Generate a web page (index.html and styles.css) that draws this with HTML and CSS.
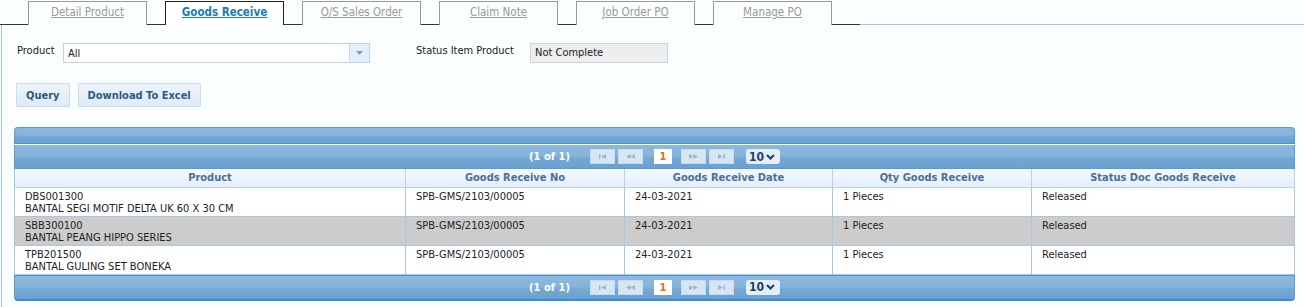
FILE: index.html
```html
<!DOCTYPE html>
<html>
<head>
<meta charset="utf-8">
<link rel="stylesheet" href="styles.css">
</head>
<body>
<div class="tabbar">
  <a class="tab">Detail Product</a>
  <a class="tab active">Goods Receive</a>
  <a class="tab">O/S Sales Order</a>
  <a class="tab">Claim Note</a>
  <a class="tab">Job Order PO</a>
  <a class="tab">Manage PO</a>
</div>
<div class="panel">
  <div class="form-row">
    <span class="label">Product</span>
    <div class="select">
      <span class="select-text">All</span>
      <span class="select-arrow"><svg width="7" height="4" viewBox="0 0 7 4"><path d="M0 0H7L3.5 4Z" fill="#7b9fc0"/></svg></span>
    </div>
    <span class="label label-status">Status Item Product</span>
    <div class="readonly">Not Complete</div>
  </div>
  <div class="btn-row">
    <button class="btn">Query</button>
    <button class="btn">Download To Excel</button>
  </div>
  <div class="grid">
    <div class="caption"></div>
    <div class="pager pager-top">
      <span class="pager-info">(1 of 1)</span>
      <span class="pbtn"><svg width="7" height="5" viewBox="0 0 7 5"><rect x="0" y="0" width="1.4" height="5" fill="#9bb6cf"/><path d="M7 0V5L2 2.5Z" fill="#9bb6cf"/></svg></span>
      <span class="pbtn"><svg width="9" height="5" viewBox="0 0 9 5"><path d="M4.5 0V5L0 2.5Z M9 0V5L4.5 2.5Z" fill="#9bb6cf"/></svg></span>
      <span class="pnum">1</span>
      <span class="pbtn"><svg width="9" height="5" viewBox="0 0 9 5"><path d="M0 0V5L4.5 2.5Z M4.5 0V5L9 2.5Z" fill="#9bb6cf"/></svg></span>
      <span class="pbtn"><svg width="7" height="5" viewBox="0 0 7 5"><path d="M0 0V5L5 2.5Z" fill="#9bb6cf"/><rect x="5.6" y="0" width="1.4" height="5" fill="#9bb6cf"/></svg></span>
      <span class="psel">10 <svg width="9" height="6" viewBox="0 0 9 6"><path d="M1 1L4.5 4.5L8 1" stroke="#1e3f62" stroke-width="2" fill="none"/></svg></span>
    </div>
    <table class="data">
      <colgroup>
        <col style="width:391px"><col style="width:219px"><col style="width:208px"><col style="width:199px"><col>
      </colgroup>
      <thead>
        <tr><th>Product</th><th>Goods Receive No</th><th>Goods Receive Date</th><th>Qty Goods Receive</th><th>Status Doc Goods Receive</th></tr>
      </thead>
      <tbody>
        <tr><td>DBS001300<br>BANTAL SEGI MOTIF DELTA UK 60 X 30 CM</td><td>SPB-GMS/2103/00005</td><td>24-03-2021</td><td>1 Pieces</td><td>Released</td></tr>
        <tr class="alt"><td>SBB300100<br>BANTAL PEANG HIPPO SERIES</td><td>SPB-GMS/2103/00005</td><td>24-03-2021</td><td>1 Pieces</td><td>Released</td></tr>
        <tr><td>TPB201500<br>BANTAL GULING SET BONEKA</td><td>SPB-GMS/2103/00005</td><td>24-03-2021</td><td>1 Pieces</td><td>Released</td></tr>
      </tbody>
    </table>
    <div class="pager pager-bottom">
      <span class="pager-info">(1 of 1)</span>
      <span class="pbtn"><svg width="7" height="5" viewBox="0 0 7 5"><rect x="0" y="0" width="1.4" height="5" fill="#9bb6cf"/><path d="M7 0V5L2 2.5Z" fill="#9bb6cf"/></svg></span>
      <span class="pbtn"><svg width="9" height="5" viewBox="0 0 9 5"><path d="M4.5 0V5L0 2.5Z M9 0V5L4.5 2.5Z" fill="#9bb6cf"/></svg></span>
      <span class="pnum">1</span>
      <span class="pbtn"><svg width="9" height="5" viewBox="0 0 9 5"><path d="M0 0V5L4.5 2.5Z M4.5 0V5L9 2.5Z" fill="#9bb6cf"/></svg></span>
      <span class="pbtn"><svg width="7" height="5" viewBox="0 0 7 5"><path d="M0 0V5L5 2.5Z" fill="#9bb6cf"/><rect x="5.6" y="0" width="1.4" height="5" fill="#9bb6cf"/></svg></span>
      <span class="psel">10 <svg width="9" height="6" viewBox="0 0 9 6"><path d="M1 1L4.5 4.5L8 1" stroke="#1e3f62" stroke-width="2" fill="none"/></svg></span>
    </div>
  </div>
</div>
</body>
</html>
```

FILE: styles.css
```css
* { box-sizing: border-box; }
html, body { margin: 0; padding: 0; }
body {
  background: #fbfefe;
  font-family: "DejaVu Sans Condensed", "DejaVu Sans", sans-serif;
  font-size: 11px;
  color: #222;
  width: 1304px;
  height: 307px;
  overflow: hidden;
}
.tabbar {
  position: relative;
  z-index: 2;
  display: flex;
  gap: 18px;
  width: 860px;
  height: 25px;
  padding: 1px 0 0 28px;
  border-bottom: 1px solid #333;
  margin-bottom: -1px;
}
.tab {
  width: 119px;
  height: 24px;
  border: 1px solid #999;
  border-bottom: none;
  background: #fbfefe;
  color: #9a9a9a;
  text-decoration: underline;
  font-size: 11.5px;
  text-align: center;
  line-height: 21px;
}
.tab.active {
  border-color: #222;
  background: #ffffff;
  color: #1b7db5;
  font-weight: bold;
}
.panel {
  border-top: 1px solid #a8c4dc;
  border-left: 1px solid #a8c4dc;
  margin-left: 1px;
  padding: 18px 0 0 13px;
  height: 290px;
}
.form-row {
  display: flex;
  align-items: flex-start;
  height: 20px;
}
.label {
  padding-top: 1px;
  margin-left: 2px;
  width: 46px;
}
.label-status {
  margin-left: 46px;
  width: 114px;
}
.select {
  display: flex;
  width: 307px;
  height: 20px;
  border: 1px solid #bed3e8;
  background: #fff;
}
.select-text {
  flex: 1;
  padding: 4px 0 0 4px;
  line-height: 12px;
}
.select-arrow {
  width: 20px;
  border-left: 1px solid #c9dcee;
  background: #e2eef9;
  display: flex;
  align-items: center;
  justify-content: center;
}
.readonly {
  width: 138px;
  height: 20px;
  border: 1px solid #c3d5e6;
  background: #eeeeee;
  padding: 3px 0 0 4px;
  line-height: 12px;
}
.btn-row {
  display: flex;
  gap: 8px;
  margin-top: 20px;
  margin-left: 1px;
}
.btn {
  height: 24px;
  border: 1px solid #c8dcef;
  background: linear-gradient(#edf4fb, #dfebf7);
  color: #2c5a85;
  font-family: inherit;
  font-size: 11px;
  font-weight: bold;
  padding: 0 9px;
  border-radius: 1px;
}
.grid {
  width: 1281px;
  margin-top: 20px;
  margin-left: -1px;
}
.caption {
  height: 17px;
  border: 1px solid #5b9bd5;
  border-bottom: 1px solid #4d91cf;
  border-radius: 4px 4px 0 0;
  background: linear-gradient(#8bb8de 0%, #86b4da 45%, #72a8d3 60%, #6aa1cf 100%);
}
.pager {
  display: flex;
  align-items: center;
  justify-content: center;
  border: 1px solid #5b9bd5;
  background: linear-gradient(#8bb8de 0%, #86b4da 45%, #72a8d3 60%, #6aa1cf 100%);
}
.pager-top {
  height: 24px;
  border-top: none;
  margin-top: 1px;
}
.pager-bottom {
  height: 26px;
  border-top: 1px solid #4d91cf;
  border-bottom: 2px solid #3e8ad0;
  border-radius: 0 0 4px 4px;
}
.pager-info {
  color: #fff;
  font-weight: bold;
  margin-right: 20px;
}
.pbtn {
  width: 25px;
  height: 15px;
  background: #d7e6f4;
  border: 1px solid #c5daee;
  display: flex;
  align-items: center;
  justify-content: center;
  margin-right: 3px;
}
.pnum {
  width: 18px;
  height: 15px;
  background: #fff;
  color: #e0700e;
  font-weight: bold;
  text-align: center;
  line-height: 15px;
  margin: 0 9px 0 8px;
}
.psel {
  margin-left: 9px;
  width: 34px;
  height: 15px;
  background: #e4eef8;
  border-radius: 3px;
  color: #1e3f62;
  font-weight: bold;
  font-size: 12px;
  display: flex;
  align-items: center;
  padding-left: 3px;
  gap: 2px;
}
.data {
  width: 100%;
  border-collapse: collapse;
  table-layout: fixed;
  border-left: 1px solid #a8c8e2;
  border-right: 1px solid #a8c8e2;
}
.data th {
  height: 18px;
  background: linear-gradient(#f2f8fe, #e4effb);
  color: #4b6f95;
  font-weight: bold;
  border-right: 1px solid #b9d4ea;
  border-bottom: 1px solid #b9d4ea;
  padding: 0;
  text-align: center;
}
.data td {
  height: 29px;
  vertical-align: top;
  padding: 3px 10px 0 10px;
  line-height: 12px;
  border-right: 1px solid #a8c8e2;
  border-bottom: 1px solid #a8c8e2;
  background: #fff;
}
.data tr.alt td { background: #cccccc; }
```
